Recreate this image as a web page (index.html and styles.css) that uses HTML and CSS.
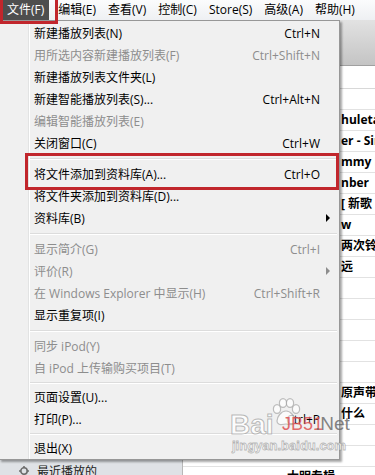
FILE: index.html
```html
<!DOCTYPE html>
<html lang="zh-CN">
<head>
<meta charset="utf-8">
<title>iTunes 文件菜单</title>
<link rel="stylesheet" href="styles.css">
</head>
<body>
<div class="window">
  <div class="menubar">
    <span class="mb-item active">文件(F)</span>
    <span class="mb-item">编辑(E)</span>
    <span class="mb-item">查看(V)</span>
    <span class="mb-item">控制(C)</span>
    <span class="mb-item">Store(S)</span>
    <span class="mb-item">高级(A)</span>
    <span class="mb-item">帮助(H)</span>
  </div>
  <div class="toolbar"></div>
  <div class="main">
    <div class="sidebar">
      <div class="sb-item">
        <svg class="sb-icon" viewBox="0 0 10 10" width="10" height="10"><circle cx="5" cy="5" r="3.2" fill="none" stroke="#6d6d6d" stroke-width="1.6"/><g stroke="#6d6d6d" stroke-width="1.6"><line x1="5" y1="0" x2="5" y2="2"/><line x1="5" y1="8" x2="5" y2="10"/><line x1="0" y1="5" x2="2" y2="5"/><line x1="8" y1="5" x2="10" y2="5"/></g></svg>
        <span>最近播放的</span>
      </div>
    </div>
    <div class="list">
      <div class="list-head"></div>
      <div class="row"></div>
      <div class="row cut">huleta</div>
      <div class="row cut">er - Sin</div>
      <div class="row cut">mmy N</div>
      <div class="row cut">nber</div>
      <div class="row cut">[ 新歌</div>
      <div class="row cut">w</div>
      <div class="row cut">两次铃</div>
      <div class="row cut">远</div>
      <div class="row"></div>
      <div class="row"></div>
      <div class="row"></div>
      <div class="row"></div>
      <div class="row"></div>
      <div class="row cut">原声带</div>
      <div class="row cut">什么</div>
      <div class="row"></div>
      <div class="row"></div>
      <div class="row">大明专辑</div>
    </div>
  </div>
</div>

<div class="menu">
  <div class="mi"><span class="lb">新建播放列表(N)</span><span class="sc">Ctrl+N</span><span class="ar"></span></div>
  <div class="mi dis"><span class="lb">用所选内容新建播放列表(F)</span><span class="sc">Ctrl+Shift+N</span><span class="ar"></span></div>
  <div class="mi"><span class="lb">新建播放列表文件夹(L)</span><span class="sc"></span><span class="ar"></span></div>
  <div class="mi"><span class="lb">新建智能播放列表(S)...</span><span class="sc">Ctrl+Alt+N</span><span class="ar"></span></div>
  <div class="mi dis"><span class="lb">编辑智能播放列表(E)</span><span class="sc"></span><span class="ar"></span></div>
  <div class="mi"><span class="lb">关闭窗口(C)</span><span class="sc">Ctrl+W</span><span class="ar"></span></div>
  <div class="sep"></div>
  <div class="mi"><span class="lb">将文件添加到资料库(A)...</span><span class="sc">Ctrl+O</span><span class="ar"></span></div>
  <div class="mi"><span class="lb">将文件夹添加到资料库(D)...</span><span class="sc"></span><span class="ar"></span></div>
  <div class="mi"><span class="lb">资料库(B)</span><span class="sc"></span><span class="ar sub"></span></div>
  <div class="sep"></div>
  <div class="mi dis"><span class="lb">显示简介(G)</span><span class="sc">Ctrl+I</span><span class="ar"></span></div>
  <div class="mi dis"><span class="lb">评价(R)</span><span class="sc"></span><span class="ar sub"></span></div>
  <div class="mi dis"><span class="lb">在 Windows Explorer 中显示(H)</span><span class="sc">Ctrl+Shift+R</span><span class="ar"></span></div>
  <div class="mi"><span class="lb">显示重复项(I)</span><span class="sc"></span><span class="ar"></span></div>
  <div class="sep"></div>
  <div class="mi dis"><span class="lb">同步 iPod(Y)</span><span class="sc"></span><span class="ar"></span></div>
  <div class="mi dis"><span class="lb">自 iPod 上传输购买项目(T)</span><span class="sc"></span><span class="ar"></span></div>
  <div class="sep"></div>
  <div class="mi"><span class="lb">页面设置(U)...</span><span class="sc"></span><span class="ar"></span></div>
  <div class="mi"><span class="lb">打印(P)...</span><span class="sc">Ctrl+P</span><span class="ar"></span></div>
  <div class="sep"></div>
  <div class="mi"><span class="lb">退出(X)</span><span class="sc"></span><span class="ar"></span></div>
</div>

<div class="mark mark-menubar"></div>
<div class="mark mark-item"></div>

<div class="wm">
  <span class="wm-bai">Bai</span>
  <svg class="wm-paw" viewBox="0 0 30 28" width="30" height="28">
    <g fill="rgba(255,255,255,0.75)" stroke="rgba(140,140,140,0.55)" stroke-width="1.2">
      <ellipse cx="6" cy="11" rx="3.6" ry="4.4"/>
      <ellipse cx="12" cy="5" rx="3.6" ry="4.4"/>
      <ellipse cx="19" cy="5" rx="3.6" ry="4.4"/>
      <ellipse cx="25" cy="11" rx="3.6" ry="4.4"/>
      <path d="M15 13c-5 0-9 6-9 10 0 3 3 4 5 3.5 2-.5 6-.5 8 0 2 .5 5-.5 5-3.5 0-4-4-10-9-10z"/>
    </g>
  </svg>
  <span class="wm-jb">JB51</span>
  <span class="wm-net">.Net</span>
  <span class="wm-url">jingyan.baidu.com</span>
</div>
</body>
</html>
```

FILE: styles.css
```css
* { box-sizing: border-box; }

body {
  margin: 0;
  width: 375px;
  height: 475px;
  overflow: hidden;
  position: relative;
  background: #fff;
  color: #000;
  font-family: "Open Sans", "Noto Sans CJK SC", sans-serif;
  font-size: 12px;
}

.window {
  display: flex;
  flex-direction: column;
  height: 475px;
}

.menubar {
  height: 20px;
  display: flex;
  padding-left: 2px;
  line-height: 20px;
  background: linear-gradient(#fbfcfd, #eef0f3);
  white-space: nowrap;
}

.mb-item {
  padding: 0 6px;
}

.mb-item.active {
  padding: 0 5px 0 4px;
  margin-left: 1px;
  margin-right: 3px;
  background: #4e4e4e;
  color: #fff;
}

.toolbar {
  height: 46px;
  background: linear-gradient(#e2e2e2, #c4c4c4);
  border-bottom: 1px solid #a0a0a0;
}

.main {
  flex: 1;
  display: flex;
  min-height: 0;
}

.sidebar {
  width: 183px;
  border-right: 1px solid #b8b8b8;
  background: #dfe2e6;
  display: flex;
  flex-direction: column;
  justify-content: flex-end;
}

.sb-item {
  height: 20px;
  margin-bottom: -6px;
  display: flex;
  align-items: center;
  padding-left: 19px;
  gap: 8px;
  color: #222;
}

.list {
  flex: 1;
  min-width: 0;
  background: #fff;
}

.list-head {
  height: 23px;
  border-bottom: 1px solid #d8d8d8;
}

.row {
  height: 21px;
  border-bottom: 1px solid #e2e2e2;
  padding-left: 104px;
  line-height: 20px;
  font-weight: bold;
  white-space: nowrap;
  overflow: hidden;
}

.row.cut {
  padding-left: 158px;
}

/* dropdown menu */
.menu {
  position: absolute;
  left: -1px;
  top: 20px;
  width: 341px;
  padding: 1px 2px 0 2px;
  background: #f0f0f0;
  border: 1px solid #979797;
  box-shadow: 2px 2px 2px rgba(0, 0, 0, 0.35);
}

.menu::before {
  content: "";
  position: absolute;
  left: 28px;
  top: 0;
  bottom: 0;
  width: 1px;
  background: #e2e3e3;
  box-shadow: 1px 0 0 #fff;
}

.mi {
  position: relative;
  display: flex;
  align-items: center;
  height: 22px;
  padding-left: 32px;
  white-space: nowrap;
}

.mi .lb { flex: 1; }

.mi .ar {
  width: 17px;
  display: flex;
  align-items: center;
}

.mi .ar.sub::before {
  content: "";
  margin-left: 6px;
  border-left: 4px solid #000;
  border-top: 4px solid transparent;
  border-bottom: 4px solid transparent;
}

.mi.dis { color: #8d8d8d; }
.mi.dis .ar.sub::before { border-left-color: #8d8d8d; }

.sep {
  position: relative;
  height: 1px;
  margin: 4px 0 3px 28px;
  background: #dcdcdc;
  border-bottom: 1px solid #fff;
  box-sizing: content-box;
}

.sep:nth-last-child(2),
.sep:nth-last-child(5) {
  margin: 3px 0 2px 28px;
}

/* red annotation boxes */
.mark {
  position: absolute;
  border: 3px solid #c1262c;
}

.mark-menubar {
  left: 0;
  top: -3px;
  width: 58px;
  height: 27px;
}

.mark-item {
  left: 25px;
  top: 153px;
  width: 314px;
  height: 37px;
}

/* watermark */
.wm {
  position: absolute;
  left: 230px;
  top: 396px;
  width: 125px;
  height: 60px;
  pointer-events: none;
}

.wm-bai {
  position: absolute;
  left: 0;
  top: 13px;
  font-family: "Liberation Sans", sans-serif;
  font-weight: bold;
  font-size: 28px;
  color: rgba(255, 255, 255, 0.85);
  -webkit-text-stroke: 1px rgba(140, 140, 140, 0.6);
}

.wm-paw {
  position: absolute;
  left: 41px;
  top: 2px;
}

.wm-jb {
  position: absolute;
  left: 52px;
  top: 18px;
  font-family: "Liberation Sans", sans-serif;
  font-size: 18px;
  color: rgba(222, 80, 80, 0.85);
}

.wm-net {
  position: absolute;
  left: 85px;
  top: 17px;
  font-family: "Liberation Sans", sans-serif;
  font-size: 19px;
  color: rgba(110, 110, 110, 0.85);
}

.wm-url {
  position: absolute;
  left: 2px;
  top: 42px;
  font-family: "Liberation Sans", sans-serif;
  font-weight: bold;
  font-size: 13px;
  color: rgba(255, 255, 255, 0.85);
  -webkit-text-stroke: 0.8px rgba(140, 140, 140, 0.6);
}
```
